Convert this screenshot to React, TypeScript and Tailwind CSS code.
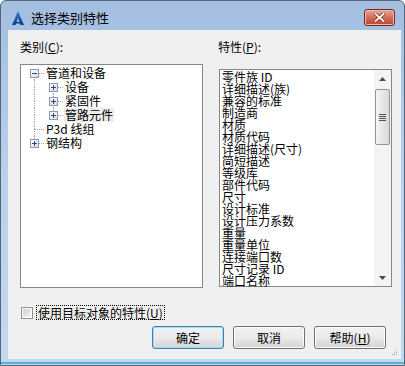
import React from "react";

const items = [
  "零件族 ID",
  "详细描述(族)",
  "兼容的标准",
  "制造商",
  "材质",
  "材质代码",
  "详细描述(尺寸)",
  "简短描述",
  "等级库",
  "部件代码",
  "尺寸",
  "设计标准",
  "设计压力系数",
  "重量",
  "重量单位",
  "连接端口数",
  "尺寸记录 ID",
  "端口名称",
];

function Conn({
  up,
  down,
  right,
  box,
}: {
  up?: boolean;
  down?: boolean;
  right?: boolean;
  box?: "plus" | "minus";
}) {
  return (
    <div className="relative w-[19px] h-[14px] shrink-0">
      {up && <div className="absolute left-[9px] top-0 h-[7px] border-l border-dotted border-[#a0a0a0]" />}
      {down && <div className="absolute left-[9px] top-[7px] h-[7px] border-l border-dotted border-[#a0a0a0]" />}
      {right && <div className="absolute left-[10px] top-[7px] w-[9px] border-t border-dotted border-[#a0a0a0]" />}
      {box && (
        <div className="absolute left-[5px] top-[3px] w-[9px] h-[9px] border border-[#8f9aa6] bg-gradient-to-br from-white to-[#d6dbe2]">
          <div className="absolute left-[1px] top-[3px] w-[5px] h-[1px] bg-[#27489a]" />
          {box === "plus" && <div className="absolute left-[3px] top-[1px] w-[1px] h-[5px] bg-[#27489a]" />}
        </div>
      )}
    </div>
  );
}

function Blank() {
  return <div className="w-[19px] h-[14px] shrink-0" />;
}

function Row({ children, label, selected }: { children: React.ReactNode; label: string; selected?: boolean }) {
  return (
    <div className="flex h-[14px] items-center">
      {children}
      <span className={`ml-[1px] px-[1px] h-[14px] leading-[14px] whitespace-nowrap ${selected ? "bg-[#ececec]" : ""}`}>
        {label}
      </span>
    </div>
  );
}

function Arrow({ down }: { down?: boolean }) {
  return (
    <div className="h-[17px] flex items-center justify-center">
      <svg width="7" height="4" viewBox="0 0 7 4">
        {down ? <polygon points="0,0 7,0 3.5,4" fill="#4a4a4a" /> : <polygon points="0,4 7,4 3.5,0" fill="#4a4a4a" />}
      </svg>
    </div>
  );
}

function Btn({ children, primary }: { children: React.ReactNode; primary?: boolean }) {
  return (
    <button
      className={`w-[72px] h-[23px] rounded-[3px] border text-[12px] text-black bg-gradient-to-b from-[#f2f2f2] via-[#ebebeb] to-[#d3d3d3] ${
        primary ? "border-[#3c7fb1] shadow-[inset_0_0_0_1px_#a8dcf5]" : "border-[#707070] shadow-[inset_0_0_0_1px_#fcfcfc]"
      }`}
    >
      {children}
    </button>
  );
}

export default function App() {
  return (
    <div className="w-[405px] h-[366px] overflow-hidden bg-white font-['Noto_Sans_CJK_SC','Microsoft_YaHei',sans-serif] text-[12px] text-black">
      <div className="w-[405px] h-[366px] rounded-t-[6px] border border-[#55657a] bg-gradient-to-b from-[#a3bedf] via-[#bad1ec] to-[#c3d8ee] flex flex-col">
        {/* title bar */}
        <div className="h-[29px] flex items-center pt-[4px] pl-[11px] pr-[9px]">
          <svg width="12" height="14" viewBox="0 0 12 14">
            <defs>
              <linearGradient id="ag" x1="0" y1="0" x2="0" y2="1">
                <stop offset="0" stopColor="#3a7fd0" />
                <stop offset="1" stopColor="#0d3c8a" />
              </linearGradient>
            </defs>
            <polygon points="6,0 12,14 8.5,14 6,7 3.5,14 0,14" fill="url(#ag)" />
            <polygon points="4.3,11 7.7,11 8.3,12.6 3.7,12.6" fill="#0d3c8a" />
          </svg>
          <span className="ml-[7px] text-[13px] leading-[16px]">选择类别特性</span>
          <div className="ml-auto w-[31px] h-[17px] rounded-[3px] border border-[#6e2a24] bg-gradient-to-b from-[#e8a89a] via-[#d26e5c] to-[#c2402f] flex items-center justify-center shadow-[inset_0_0_0_1px_#f0b8aa]">
            <svg width="11" height="9" viewBox="0 0 11 9">
              <path d="M1.5 1 L9.5 8 M9.5 1 L1.5 8" stroke="#7a2a20" strokeWidth="3.2" strokeLinecap="square" />
              <path d="M1.5 1 L9.5 8 M9.5 1 L1.5 8" stroke="#ffffff" strokeWidth="1.8" strokeLinecap="square" />
            </svg>
          </div>
        </div>
        {/* frame + client */}
        <div className="flex pl-[7px] pr-[3px]">
          <div className="relative w-[393px] h-[329px] bg-[#f0f0f0] pt-[11px]">
            <div className="flex pl-[12px]">
              <div className="w-[183px] flex flex-col">
                <div className="h-[12px] leading-[12px]">
                  类别(<span className="underline">C</span>):
                </div>
                <div className="mt-[11px] h-[224px] border border-[#828790] bg-white pt-[1px] pl-[4px]">
                  <Row label="管道和设备">
                    <Conn down right box="minus" />
                  </Row>
                  <Row label="设备">
                    <Conn up down />
                    <Conn down right box="plus" />
                  </Row>
                  <Row label="紧固件">
                    <Conn up down />
                    <Conn up down right box="plus" />
                  </Row>
                  <Row label="管路元件" selected>
                    <Conn up down />
                    <Conn up right box="plus" />
                  </Row>
                  <Row label="P3d 线组">
                    <Conn up down right />
                  </Row>
                  <Row label="钢结构">
                    <Conn up right box="plus" />
                  </Row>
                </div>
              </div>
              <div className="ml-[15px] w-[174px] flex flex-col">
                <div className="h-[12px] leading-[12px]">
                  特性(<span className="underline">P</span>):
                </div>
                <div className="mt-[16px] ml-[1px] h-[218px] border border-[#828790] bg-white flex">
                  <div className="flex-1 pl-[2px] pt-[1px]">
                    {items.map((t) => (
                      <div key={t} className="h-[12px] leading-[12px] whitespace-nowrap">
                        {t}
                      </div>
                    ))}
                  </div>
                  <div className="w-[17px] bg-[#f3f3f3] flex flex-col">
                    <Arrow />
                    <div className="mt-[2px] mx-[1px] h-[56px] rounded-[2px] border border-[#959595] bg-gradient-to-r from-[#f4f4f4] to-[#d8d8d8] flex flex-col items-center justify-center gap-[1px]">
                      <div className="w-[7px] h-[1px] bg-[#555]" />
                      <div className="w-[7px] h-[1px] bg-[#555]" />
                      <div className="w-[7px] h-[1px] bg-[#555]" />
                      <div className="w-[7px] h-[1px] bg-[#555]" />
                    </div>
                    <div className="flex-1" />
                    <Arrow down />
                  </div>
                </div>
              </div>
            </div>
            {/* checkbox */}
            <div className="mt-[18px] ml-[13px] flex items-center h-[13px]">
              <div className="w-[12px] h-[12px] border border-[#8e8f8f] bg-white p-[1px]">
                <div className="w-full h-full bg-gradient-to-br from-[#cfcfcf] to-[#f4f4f4]" />
              </div>
              <span className="ml-[3px] px-[1px] h-[15px] leading-[13px] border border-dotted border-black">
                使用目标对象的特性(<span className="underline">U</span>)
              </span>
            </div>
            {/* buttons */}
            <div className="mt-[7px] flex justify-end gap-[9px] pr-[15px]">
              <Btn primary>确定</Btn>
              <Btn>取消</Btn>
              <Btn>
                帮助(<span className="underline">H</span>)
              </Btn>
            </div>
            <svg className="absolute right-[3px] bottom-[2px]" width="7" height="7" viewBox="0 0 7 7">
              <rect x="5" y="0" width="1" height="1" fill="#999" />
              <rect x="3" y="2" width="1" height="1" fill="#999" />
              <rect x="5" y="2" width="1" height="1" fill="#999" />
              <rect x="1" y="4" width="1" height="1" fill="#999" />
              <rect x="3" y="4" width="1" height="1" fill="#999" />
              <rect x="5" y="4" width="1" height="1" fill="#999" />
            </svg>
          </div>
        </div>
        <div className="h-[3px]" />
        <div className="h-[2px] bg-[#4fb3d9]" />
      </div>
    </div>
  );
}
